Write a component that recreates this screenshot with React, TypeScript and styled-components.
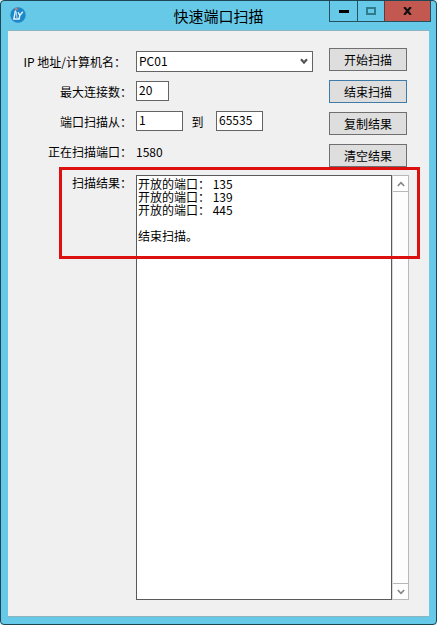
import React, { useState } from "react";
import styled, { createGlobalStyle } from "styled-components";

const GlobalStyle = createGlobalStyle`
  * { box-sizing: border-box; }
  body {
    margin: 0;
    background: #e4f3f8;
    color: #000;
    font: 12px/13px "Noto Sans CJK SC", sans-serif;
  }
  button, input, select, textarea { font: inherit; color: inherit; }
`;

const Window = styled.main`
  display: flex;
  flex-direction: column;
  min-height: 100vh;
  padding: 0 7px 7px;
  border: 1px solid #1f4655;
  border-radius: 4px;
  background: #66c9e8;
`;

const TitleBar = styled.header`
  display: grid;
  grid-template-columns: 1fr auto 1fr;
  height: 29px;
`;

const Logo = styled.svg`
  margin: 6px 0 0 2px;
`;

const Title = styled.h1`
  margin: 0;
  font: 15px/29px "Noto Sans CJK SC", sans-serif;
`;

const Caption = styled.div`
  display: flex;
  justify-self: end;
  height: 21px;
  margin-right: -2px;
  border: 1px solid #25505f;
  border-top: 0;
`;

const CaptionButton = styled.button<{ $close?: boolean }>`
  display: grid;
  place-items: center;
  width: ${(p) => (p.$close ? "46px" : "27px")};
  padding: 0;
  border: 0;
  border-left: ${(p) => (p.$close ? "1px solid #5f3a40" : "0")};
  background: ${(p) => (p.$close ? "#c2584f" : "transparent")};
  & + &:nth-child(2) { border-left: 1px solid #25505f; }
`;

const Body = styled.form`
  display: flex;
  flex: 1;
  flex-direction: column;
  padding: 17px 20px 16px 0;
  border: 0 solid #8fb3bf;
  border-width: 1px 0;
  background: #f0f0f0;
`;

const Settings = styled.div`
  display: flex;
  gap: 16px;
  padding-right: 2px;
`;

const Fields = styled.div`
  display: flex;
  flex: 1;
  flex-direction: column;
  gap: 9px;
  padding-top: 3px;
`;

const Row = styled.div`
  display: flex;
  height: 21px;
`;

const Label = styled.label<{ $inset?: boolean }>`
  flex: none;
  width: 128px;
  padding-right: ${(p) => (p.$inset ? "10px" : "4px")};
  line-height: 21px;
  text-align: right;
  white-space: nowrap;
`;

const TextBox = styled.input<{ $wide?: boolean }>`
  width: ${(p) => (p.$wide ? "47px" : "33px")};
  height: 20px;
  padding: 0 2px 3px;
  border: 1px solid #646464;
  background: #fff;
  outline: 0;
`;

const Between = styled.label`
  width: 33px;
  padding-right: 4px;
  line-height: 21px;
  text-align: center;
`;

const Combo = styled.div`
  display: grid;
  flex: 1;
  align-items: center;
  border: 1px solid #646464;
  background: #fff;
  & > * { grid-area: 1 / 1; }
  svg { justify-self: end; margin-right: 4px; pointer-events: none; }
`;

const Select = styled.select`
  appearance: none;
  width: 100%;
  padding: 0 2px 2px;
  border: 0;
  background: transparent;
  outline: 0;
`;

const Status = styled.output`
  line-height: 21px;
`;

const Actions = styled.div`
  display: flex;
  flex-direction: column;
  gap: 9px;
`;

const ActionButton = styled.button<{ $active?: boolean }>`
  width: 78px;
  height: 23px;
  padding: 0;
  border: 1px solid ${(p) => (p.$active ? "#3f7ba8" : "#707070")};
  background: #dedede;
`;

const Results = styled.section`
  position: relative;
  display: flex;
  flex: 1;
  margin-top: 8px;
`;

const ResultLabel = styled(Label)`
  line-height: 15px;
`;

const Output = styled.textarea`
  flex: 1;
  min-width: 0;
  padding: 1px;
  border: 1px solid #5a5a5a;
  background: #fff;
  outline: 0;
  resize: none;
  overflow: hidden;
`;

const ScrollBar = styled.div`
  display: flex;
  flex-direction: column;
  justify-content: space-between;
  width: 17px;
  border: 1px solid #b8b8b8;
  border-left-color: #d8d8d8;
  background: #fdfdfd;
`;

const ScrollButton = styled.button<{ $end?: boolean }>`
  display: grid;
  place-items: center;
  height: 16px;
  padding: 0;
  border: 0 solid #b8b8b8;
  border-width: ${(p) => (p.$end ? "1px 0 0" : "0 0 1px")};
  background: #fff;
`;

const Highlight = styled.div`
  position: absolute;
  top: -8px;
  left: 51px;
  right: -11px;
  height: 92px;
  border: 3px solid #dd1010;
  pointer-events: none;
`;

const actions = ["开始扫描", "结束扫描", "复制结果", "清空结果"];
const scanLog = "开放的端口： 135\n开放的端口： 139\n开放的端口： 445\n\n结束扫描。";

export default function App() {
  const [log, setLog] = useState(scanLog);

  const run = (name: string) => {
    if (name === "清空结果") setLog("");
    if (name === "复制结果") navigator.clipboard?.writeText(log);
    if (name === "开始扫描") setLog(scanLog);
  };

  return (
    <>
      <GlobalStyle />
      <Window>
        <TitleBar>
          <Logo width="16" height="16" viewBox="0 0 16 16" aria-hidden="true">
            <circle cx="8" cy="8" r="7.7" fill="#1c87c9" />
            <path d="M5.5 3.5 3.8 12h4.7M8.2 5.2l1.6 3.3 3-3.7M9.8 8.5 9 12.6" fill="none" stroke="#e8f5fb" strokeWidth="1.4" />
            <path d="M6.2 4.5 7 11" stroke="#b5ddf0" strokeWidth="1" />
            <circle cx="6.3" cy="1.9" r="1.3" fill="#d8796d" />
          </Logo>
          <Title>快速端口扫描</Title>
          <Caption>
            <CaptionButton type="button" aria-label="最小化">
              <svg width="10" height="3" viewBox="0 0 10 3"><path d="M0 0h10v3H0z" /></svg>
            </CaptionButton>
            <CaptionButton type="button" aria-label="最大化">
              <svg width="10" height="8" viewBox="0 0 10 8"><path d="M1 1h8v6H1z" fill="none" stroke="#31798c" strokeWidth="2" /></svg>
            </CaptionButton>
            <CaptionButton type="button" $close aria-label="关闭">
              <svg width="9" height="8" viewBox="0 0 9 8"><path d="M1.2 0 7.8 8M7.8 0 1.2 8" stroke="#111" strokeWidth="2.2" /></svg>
            </CaptionButton>
          </Caption>
        </TitleBar>
        <Body onSubmit={(e) => e.preventDefault()}>
          <Settings>
            <Fields>
              <Row>
                <Label htmlFor="host" $inset>IP 地址/计算机名：</Label>
                <Combo>
                  <Select id="host"><option>PC01</option></Select>
                  <svg width="8" height="7" viewBox="0 0 8 7"><path d="M1 1.2 4 4.6 7 1.2" fill="none" stroke="#555" strokeWidth="2.2" /></svg>
                </Combo>
              </Row>
              <Row>
                <Label htmlFor="connections">最大连接数：</Label>
                <TextBox id="connections" defaultValue="20" />
              </Row>
              <Row>
                <Label htmlFor="from">端口扫描从：</Label>
                <TextBox id="from" $wide defaultValue="1" />
                <Between htmlFor="to">到</Between>
                <TextBox id="to" $wide defaultValue="65535" />
              </Row>
              <Row>
                <Label htmlFor="current">正在扫描端口：</Label>
                <Status id="current">1580</Status>
              </Row>
            </Fields>
            <Actions>
              {actions.map((name) => (
                <ActionButton key={name} type="button" $active={name === "结束扫描"} onClick={() => run(name)}>
                  {name}
                </ActionButton>
              ))}
            </Actions>
          </Settings>
          <Results>
            <ResultLabel htmlFor="results">扫描结果：</ResultLabel>
            <Output id="results" readOnly value={log} />
            <ScrollBar>
              <ScrollButton type="button" aria-label="向上滚动">
                <svg width="8" height="6" viewBox="0 0 8 6"><path d="M.8 5 4 1.6 7.2 5" fill="none" stroke="#858585" strokeWidth="1.6" /></svg>
              </ScrollButton>
              <ScrollButton type="button" $end aria-label="向下滚动">
                <svg width="8" height="6" viewBox="0 0 8 6"><path d="M.8 1 4 4.4 7.2 1" fill="none" stroke="#858585" strokeWidth="1.6" /></svg>
              </ScrollButton>
            </ScrollBar>
            <Highlight />
          </Results>
        </Body>
      </Window>
    </>
  );
}
